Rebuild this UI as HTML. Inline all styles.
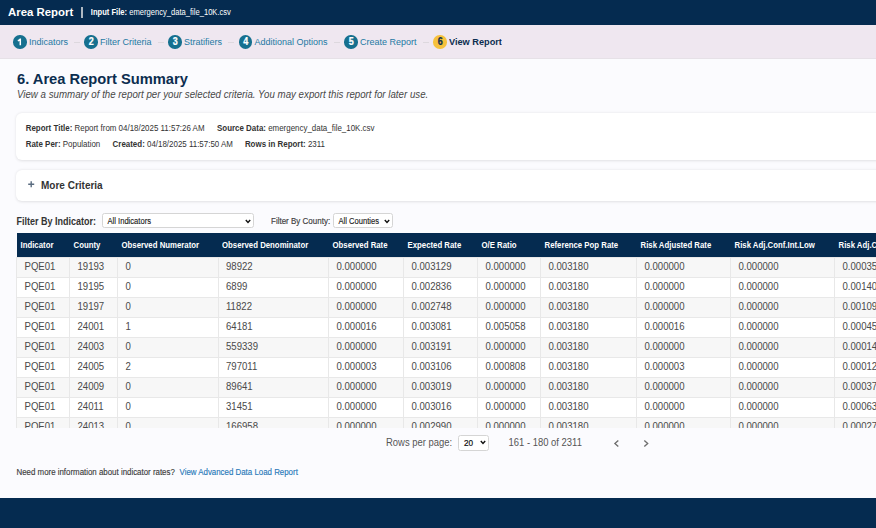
<!DOCTYPE html>
<html><head><meta charset="utf-8">
<style>
*{box-sizing:border-box;margin:0;padding:0}
html,body{width:876px;height:528px;overflow:hidden;background:#fbfbfe;font-family:"Liberation Sans",sans-serif;color:#333}
.topbar{position:absolute;left:0;top:0;width:876px;height:25px;background:#052b50;color:#fff}
.topbar .t1{position:absolute;left:8px;top:4px;font-size:11.4px;font-weight:bold;line-height:16px;white-space:nowrap}
.topbar .sep{position:absolute;left:81.2px;top:7.1px;width:1.6px;height:10.7px;background:#aeb8c2}
.topbar .t2{position:absolute;left:90.8px;top:7px;font-size:7.6px;font-weight:normal;line-height:11px;white-space:nowrap;transform:scaleY(1.12);transform-origin:0 65%}
.steps{position:absolute;left:0;top:25px;width:876px;height:34px;background:#efe7f0;border-bottom:1px solid #e6e1e7}
.step{position:absolute;top:10px;height:14px;white-space:nowrap;font-size:9px;line-height:14px;color:#2379a3}
.circ{position:absolute;left:0;top:0;width:13.5px;height:13.5px;border-radius:50%;background:#16708f;color:#fff;font-weight:bold;font-size:9px;line-height:13.5px;text-align:center}
.circ span{display:inline-block;position:relative;top:1.4px;left:0.5px;transform:scaleY(1.22);transform-origin:50% 55%;-webkit-text-stroke:0.2px currentColor}
.step .lbl{position:absolute;left:16px;top:-0.3px;transform:scaleY(1.07)!important}
.dash{position:absolute;top:17px;height:1px;width:6px;background:#ddd8de}
h1{position:absolute;left:17px;top:70.3px;font-size:14.7px;font-weight:bold;color:#0b2d4f;line-height:18px;white-space:nowrap}
.sub{position:absolute;left:17px;top:89px;font-size:9.72px;font-style:italic;color:#484848;line-height:12px;white-space:nowrap}
.card{position:absolute;left:16.2px;width:880px;background:#fff;border-radius:6px;box-shadow:0 0.5px 3px rgba(0,0,0,0.11)}
.c1{top:113px;height:47px}
.c2{top:170px;height:31px}
.kv{position:absolute;font-size:7.95px;line-height:10px;color:#333;white-space:nowrap}
.kv b{color:#333}
.more{position:absolute;left:24.8px;top:8.7px;font-size:10px;font-weight:bold;color:#333;line-height:14px;white-space:nowrap}
.more .plus{display:inline-block;font-weight:bold;color:#4b5565;margin-right:7px;font-size:11px}
.fl{position:absolute;top:216px;font-size:9px;font-weight:bold;color:#333;line-height:12px;white-space:nowrap}
.fl2{position:absolute;top:216px;font-size:8px;color:#3d3d3d;-webkit-text-stroke:0.15px #3d3d3d;line-height:12px;white-space:nowrap}
.sel{position:absolute;background:#fff;border:1px solid #d5d5d5;border-radius:2.5px;font-size:7.6px;color:#1a1a1a;line-height:16.5px;padding-left:4.5px;-webkit-text-stroke:0.12px #1a1a1a;white-space:nowrap}
.chev{position:absolute;right:1.2px;top:4.4px;width:6px;height:5px}
table{position:absolute;left:16px;top:233.2px;width:918px;border-collapse:collapse;font-size:9.6px;table-layout:fixed}
th{background:#052b50;color:#fff;font-weight:bold;font-size:7.8px;text-align:left;height:24.4px;padding:1.5px 4px 0 4px;white-space:nowrap;overflow:hidden}
td{height:20px;padding:0 7px 1.6px 7.5px;border:1px solid #e8e8e8;color:#4a4a4a;white-space:nowrap;overflow:hidden}
td i{font-style:normal;display:inline-block;transform:scaleY(1.12);transform-origin:0 70%}
th i{font-style:normal;display:inline-block;transform:scaleY(1.14);transform-origin:0 55%}
.sub,.kv,.fl,.fl2,.pg,.foot,.step .lbl{transform:scaleY(1.12);transform-origin:0 60%}
.sel span{display:inline-block;transform:scaleY(1.2);transform-origin:0 62%}
tr.o td{background:#f7f7f7}
tr.e td{background:#fff}
.clip{position:absolute;left:0;top:0;width:876px;height:427.5px;overflow:hidden}
.pg{position:absolute;top:437px;font-size:9.45px;color:#555;line-height:11px;white-space:nowrap}
.foot{position:absolute;left:16.5px;top:467.7px;font-size:7.9px;color:#3a3a3a;-webkit-text-stroke:0.12px #3a3a3a;line-height:10px;white-space:nowrap}
.foot a{-webkit-text-stroke:0.12px #1f77b8;color:#1f77b8;text-decoration:none;margin-left:4.7px}
.bottom{position:absolute;left:0;top:498px;width:876px;height:30px;background:#052b50}
</style></head><body>
<div class="topbar">
  <div class="t1">Area Report</div>
  <div class="sep"></div>
  <div class="t2"><b>Input File:</b> emergency_data_file_10K.csv</div>
</div>
<div class="steps">
  <div class="step" style="left:13px"><div class="circ"><svg style="position:absolute;left:0;top:0" width="13.5" height="13.5" viewBox="0 0 13.5 13.5"><path d="M7.3 3.6 V10.3 M7.3 3.8 C6.8 4.8 5.9 5.4 4.8 5.8" fill="none" stroke="#fff" stroke-width="1.5"/></svg></div><span class="lbl">Indicators</span></div>
  <div class="dash" style="left:74px"></div>
  <div class="step" style="left:84px"><div class="circ"><span>2</span></div><span class="lbl">Filter Criteria</span></div>
  <div class="dash" style="left:158px"></div>
  <div class="step" style="left:168px"><div class="circ"><span>3</span></div><span class="lbl">Stratifiers</span></div>
  <div class="dash" style="left:227.5px"></div>
  <div class="step" style="left:238.5px"><div class="circ"><span>4</span></div><span class="lbl">Additional Options</span></div>
  <div class="dash" style="left:334px"></div>
  <div class="step" style="left:344px"><div class="circ"><span>5</span></div><span class="lbl">Create Report</span></div>
  <div class="dash" style="left:423px"></div>
  <div class="step" style="left:433px"><div class="circ" style="background:#f6c13c;color:#0b2d4f"><span>6</span></div><span class="lbl" style="font-weight:bold;color:#0b2d4f;font-size:9.2px">View Report</span></div>
</div>
<h1>6. Area Report Summary</h1>
<div class="sub">View a summary of the report per your selected criteria. You may export this report for later use.</div>
<div class="card c1">
  <div class="kv" style="left:9.5px;top:11px"><b>Report Title:</b> Report from 04/18/2025 11:57:26 AM</div>
  <div class="kv" style="left:200.8px;top:11px"><b>Source Data:</b> emergency_data_file_10K.csv</div>
  <div class="kv" style="left:9.5px;top:27.3px"><b>Rate Per:</b> Population</div>
  <div class="kv" style="left:96.4px;top:27.3px"><b>Created:</b> 04/18/2025 11:57:50 AM</div>
  <div class="kv" style="left:228.7px;top:27.3px"><b>Rows in Report:</b> 2311</div>
</div>
<div class="card c2">
  <svg style="position:absolute;left:11.6px;top:10.8px" width="7" height="7" viewBox="0 0 7 7"><path d="M3.2 0.2 V6.2 M0.2 3.2 H6.2" fill="none" stroke="#5a6c80" stroke-width="1.4"/></svg><div class="more">More Criteria</div>
</div>
<div class="fl" style="left:16.5px">Filter By Indicator:</div>
<div class="sel" style="left:102px;top:213.2px;width:151.5px;height:15.3px"><span>All Indicators</span><svg class="chev" viewBox="0 0 6 5"><path d="M0.8 1 L3 3.5 L5.2 1" fill="none" stroke="#111" stroke-width="1.4"/></svg></div>
<div class="fl2" style="left:271px">Filter By County:</div>
<div class="sel" style="left:333px;top:213.2px;width:59.5px;height:15.3px"><span>All Counties</span><svg class="chev" viewBox="0 0 6 5"><path d="M0.8 1 L3 3.5 L5.2 1" fill="none" stroke="#111" stroke-width="1.4"/></svg></div>
<div class="clip">
<table>
<colgroup><col style="width:53px"><col style="width:48px"><col style="width:100.5px"><col style="width:110.5px"><col style="width:75px"><col style="width:74px"><col style="width:63px"><col style="width:96px"><col style="width:94px"><col style="width:104px"><col style="width:100px"></colgroup>
<tr><th><i>Indicator</i></th><th><i>County</i></th><th><i>Observed Numerator</i></th><th><i>Observed Denominator</i></th><th><i>Observed Rate</i></th><th><i>Expected Rate</i></th><th><i>O/E Ratio</i></th><th><i>Reference Pop Rate</i></th><th><i>Risk Adjusted Rate</i></th><th><i>Risk Adj.Conf.Int.Low</i></th><th><i>Risk Adj.Conf.Int.High</i></th></tr>
<tr class="o"><td><i>PQE01</i></td><td><i>19193</i></td><td><i>0</i></td><td><i>98922</i></td><td><i>0.000000</i></td><td><i>0.003129</i></td><td><i>0.000000</i></td><td><i>0.003180</i></td><td><i>0.000000</i></td><td><i>0.000000</i></td><td><i>0.000355</i></td></tr>
<tr class="e"><td><i>PQE01</i></td><td><i>19195</i></td><td><i>0</i></td><td><i>6899</i></td><td><i>0.000000</i></td><td><i>0.002836</i></td><td><i>0.000000</i></td><td><i>0.003180</i></td><td><i>0.000000</i></td><td><i>0.000000</i></td><td><i>0.001405</i></td></tr>
<tr class="o"><td><i>PQE01</i></td><td><i>19197</i></td><td><i>0</i></td><td><i>11822</i></td><td><i>0.000000</i></td><td><i>0.002748</i></td><td><i>0.000000</i></td><td><i>0.003180</i></td><td><i>0.000000</i></td><td><i>0.000000</i></td><td><i>0.001095</i></td></tr>
<tr class="e"><td><i>PQE01</i></td><td><i>24001</i></td><td><i>1</i></td><td><i>64181</i></td><td><i>0.000016</i></td><td><i>0.003081</i></td><td><i>0.005058</i></td><td><i>0.003180</i></td><td><i>0.000016</i></td><td><i>0.000000</i></td><td><i>0.000455</i></td></tr>
<tr class="o"><td><i>PQE01</i></td><td><i>24003</i></td><td><i>0</i></td><td><i>559339</i></td><td><i>0.000000</i></td><td><i>0.003191</i></td><td><i>0.000000</i></td><td><i>0.003180</i></td><td><i>0.000000</i></td><td><i>0.000000</i></td><td><i>0.000145</i></td></tr>
<tr class="e"><td><i>PQE01</i></td><td><i>24005</i></td><td><i>2</i></td><td><i>797011</i></td><td><i>0.000003</i></td><td><i>0.003106</i></td><td><i>0.000808</i></td><td><i>0.003180</i></td><td><i>0.000003</i></td><td><i>0.000000</i></td><td><i>0.000125</i></td></tr>
<tr class="o"><td><i>PQE01</i></td><td><i>24009</i></td><td><i>0</i></td><td><i>89641</i></td><td><i>0.000000</i></td><td><i>0.003019</i></td><td><i>0.000000</i></td><td><i>0.003180</i></td><td><i>0.000000</i></td><td><i>0.000000</i></td><td><i>0.000375</i></td></tr>
<tr class="e"><td><i>PQE01</i></td><td><i>24011</i></td><td><i>0</i></td><td><i>31451</i></td><td><i>0.000000</i></td><td><i>0.003016</i></td><td><i>0.000000</i></td><td><i>0.003180</i></td><td><i>0.000000</i></td><td><i>0.000000</i></td><td><i>0.000635</i></td></tr>
<tr class="o"><td><i>PQE01</i></td><td><i>24013</i></td><td><i>0</i></td><td><i>166958</i></td><td><i>0.000000</i></td><td><i>0.002990</i></td><td><i>0.000000</i></td><td><i>0.003180</i></td><td><i>0.000000</i></td><td><i>0.000000</i></td><td><i>0.000275</i></td></tr>
</table>
</div>
<div class="pg" style="left:386px">Rows per page:</div>
<div class="sel" style="left:458.4px;top:435.4px;width:30.2px;height:15.2px;font-size:8.2px;padding-left:4.6px;line-height:15px;color:#111;-webkit-text-stroke:0.2px #111"><span>20</span><svg class="chev" style="top:4px" viewBox="0 0 6 5"><path d="M0.8 1 L3 3.5 L5.2 1" fill="none" stroke="#111" stroke-width="1.4"/></svg></div>
<div class="pg" style="left:508.6px">161 - 180 of 2311</div>
<svg style="position:absolute;left:613px;top:439px" width="8" height="9" viewBox="0 0 8 9"><path d="M5.3 1.4 L1.9 4.5 L5.3 7.6" fill="none" stroke="#6e6e6e" stroke-width="1.35"/></svg>
<svg style="position:absolute;left:642px;top:439px" width="8" height="9" viewBox="0 0 8 9"><path d="M2.3 1.4 L5.7 4.5 L2.3 7.6" fill="none" stroke="#6e6e6e" stroke-width="1.35"/></svg>
<div class="foot">Need more information about indicator rates?<a>View Advanced Data Load Report</a></div>
<div class="bottom"></div>
</body></html>
